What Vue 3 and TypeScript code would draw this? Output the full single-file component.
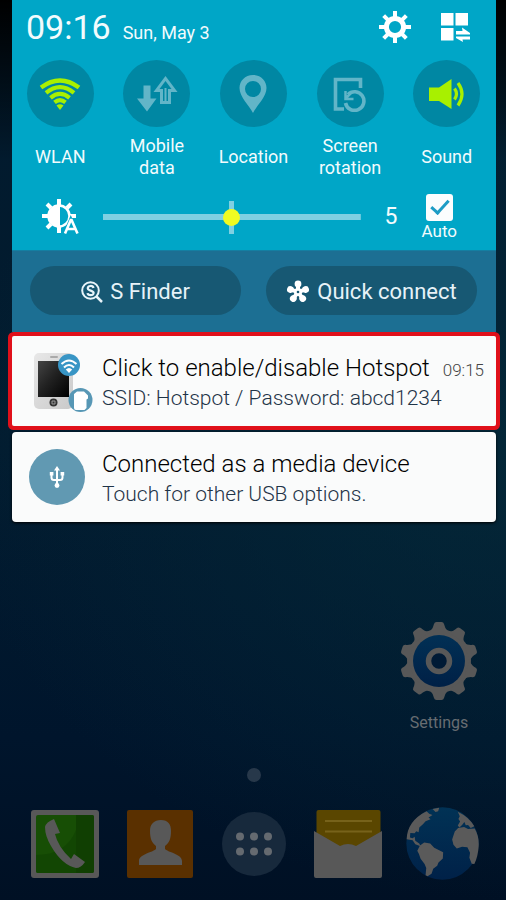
<script setup lang="ts">
import { ref } from 'vue'

interface Toggle {
  id: string
  label: string
  on: boolean
}

const toggles = ref<Toggle[]>([
  { id: 'wlan', label: 'WLAN', on: true },
  { id: 'data', label: 'Mobile data', on: false },
  { id: 'location', label: 'Location', on: false },
  { id: 'rotation', label: 'Screen rotation', on: false },
  { id: 'sound', label: 'Sound', on: true },
])

const brightness = ref<number>(5)
const autoBrightness = ref<boolean>(true)

const eightTeeth: number[] = Array.from({ length: 8 }, (_, i) => i * 45)
const tenTeeth: number[] = Array.from({ length: 10 }, (_, i) => i * 36)
const petals: number[] = Array.from({ length: 5 }, (_, i) => i * 72)
</script>

<template>
  <div class="phone">
    <section class="shade">
      <div class="quick">
        <header class="status">
          <time class="clock">09:16</time>
          <span class="date">Sun, May 3</span>
          <button class="icon-button" type="button" aria-label="Settings">
            <svg width="32" height="32" viewBox="-16 -16 32 32" aria-hidden="true">
              <circle r="8.6" fill="none" stroke="#fff" stroke-width="5" />
              <rect v-for="a in eightTeeth" :key="a" x="-2" y="-16" width="4" height="7" fill="#fff" :transform="`rotate(${a})`" />
            </svg>
          </button>
          <button class="icon-button" type="button" aria-label="Edit quick panel">
            <svg width="30" height="30" viewBox="0 0 30 30" fill="#fff" aria-hidden="true">
              <path d="M0 1h12.500v12.500H0zM14.500 1H27v12.500H14.500zM0 16h12.500v12.500H0z" />
              <path d="M15 19h6.500l-.5-3.500 8 5.500v1.500H15zM29 24.500H15V26l7 4-.5-2.500H29z" />
            </svg>
          </button>
        </header>

        <div class="toggles">
          <button v-for="t in toggles" :key="t.id" class="toggle" :class="{ on: t.on }" type="button" :aria-pressed="t.on" @click="t.on = !t.on">
            <span class="disc">
              <svg v-if="t.id === 'wlan'" width="42" height="32" viewBox="0 0 42 32" aria-hidden="true">
                <g fill="none" stroke="currentColor" stroke-width="4.200">
                  <path d="M2 9.500Q21-4.500 40 9.500" />
                  <path d="M7 14.800Q21 3.500 35 14.800" />
                  <path d="M11.500 19.800Q21 12 30.500 19.800" />
                  <path d="M15.500 24.400Q21 20 26.500 24.400" />
                </g>
                <path d="M17.500 27.500Q21 25 24.500 27.500L21 32z" fill="currentColor" />
              </svg>
              <svg v-else-if="t.id === 'data'" width="42" height="36" viewBox="0 0 42 36" aria-hidden="true">
                <path d="M7.500 9.500h7v13h6L11 35.500 1 22.500h6.500z" fill="currentColor" />
                <path fill-rule="evenodd" d="M29.500 0L41.500 16H35v12H24V16h-6.500zM29.500 5l-6 8H27v12h1.500V12h2v13H32V13h3.500z" fill="currentColor" />
              </svg>
              <svg v-else-if="t.id === 'location'" width="30" height="38" viewBox="0 0 30 38" aria-hidden="true">
                <path fill-rule="evenodd" fill="currentColor" d="M15 0C7 0 1.500 6 1.500 13c0 9 9.500 17 13.500 25 4-8 13.500-16 13.500-25C28.500 6 23 0 15 0zm0 6a8 8 0 1 1 0 16 8 8 0 0 1 0-16z" />
              </svg>
              <svg v-else-if="t.id === 'rotation'" width="34" height="36" viewBox="0 0 34 36" fill="none" stroke="currentColor" stroke-width="3.600" aria-hidden="true">
                <path d="M11 33H2.500V3.500h25V12" />
                <path d="M15 18.500A9.300 9.300 0 1 1 12.500 27" />
                <path d="M12.500 15v8h8M13 22l6-6" stroke-width="2.500" />
              </svg>
              <svg v-else width="38" height="32" viewBox="0 0 38 32" aria-hidden="true">
                <path d="M1 9.500h10L23.500 1v30L11 23H1z" fill="currentColor" />
                <path d="M26.500 10.500Q30.500 16 26.500 21.500M30 5Q38 16 30 27.500" fill="none" stroke="currentColor" stroke-width="3.200" />
              </svg>
            </span>
            <span class="toggle-label"><span>{{ t.label }}</span></span>
          </button>
        </div>

        <div class="brightness">
          <svg class="sun" width="38" height="38" viewBox="-18 -18 38 38" aria-hidden="true">
            <g stroke="#fff" stroke-width="4">
              <path d="M0-17v6M0 11v6M-17 0h6M11 0h6M-12-12l4 4M12-12l-4 4M-12 12l4-4" />
            </g>
            <circle r="10.500" fill="none" stroke="#fff" stroke-width="2.500" />
            <path d="M1-11.500A11.500 11.500 0 0 0 1 11.500z" fill="#fff" />
            <path d="M6 18L11.800 4 18 18z" fill="#00a6c7" stroke="#00a6c7" stroke-width="4" />
            <path d="M6 17.500L11.800 4h.8L18.500 17.500M8.500 13h7.500" fill="none" stroke="#fff" stroke-width="2.600" />
          </svg>
          <div class="slider">
            <input v-model.number="brightness" type="range" min="0" max="10" aria-label="Brightness" />
          </div>
          <output class="level">{{ brightness }}</output>
          <label class="auto">
            <input v-model="autoBrightness" type="checkbox" />
            <span>Auto</span>
          </label>
        </div>
      </div>

      <div class="shortcuts">
        <button class="pill" type="button">
          <svg width="22" height="22" viewBox="0 0 22 22" fill="none" stroke="#e8f4fa" aria-hidden="true">
            <circle cx="9.500" cy="9.500" r="8.300" stroke-width="2" />
            <path d="M15.500 15.500l5.500 5.500" stroke-width="2.500" />
            <path d="M12.500 7C12 4.200 6.500 4.300 6.800 7.300c.2 2.700 5.700 1.900 5.800 4.600.1 2.900-5.600 3-6.100.2" stroke-width="2.200" />
          </svg>
          <span>S Finder</span>
        </button>
        <button class="pill" type="button">
          <svg width="24" height="24" viewBox="-12 -12 24 24" aria-hidden="true">
            <g v-for="a in petals" :key="a" :transform="`rotate(${a})`" fill="#fff">
              <circle cy="-8" r="3.400" />
              <rect x="-2" y="-7" width="4" height="6" />
            </g>
            <circle r="4" fill="#fff" />
            <circle r="1.300" fill="#175873" />
          </svg>
          <span>Quick connect</span>
        </button>
      </div>

      <div class="notifications">
        <article class="card highlighted">
          <svg class="card-icon" width="66" height="62" viewBox="0 0 66 62" aria-hidden="true">
            <defs>
              <linearGradient id="body" x2="1" y2="1"><stop stop-color="#e8e8e8" /><stop offset="1" stop-color="#c9c9c9" /></linearGradient>
              <linearGradient id="glass" x2="1" y2="1"><stop stop-color="#444" /><stop offset=".45" stop-color="#222" /><stop offset="1" stop-color="#000" /></linearGradient>
            </defs>
            <rect x="6" y="2" width="39" height="56" rx="5" fill="url(#body)" />
            <rect x="22" y="5" width="8" height="2" rx="1" fill="#aaa" />
            <rect x="10" y="10" width="31" height="36" fill="url(#glass)" />
            <circle cx="25.500" cy="51.500" r="4" fill="#333" />
            <path d="M24 50h3v3h-3z" fill="none" stroke="#999" />
            <circle cx="41" cy="14" r="11" fill="#3895c5" />
            <g fill="none" stroke="#fff" stroke-width="2">
              <path d="M33.500 13Q41 6 48.500 13M36 16.500Q41 11.500 46 16.500" />
            </g>
            <path d="M37.800 18.500Q41 15.500 44.200 18.500L41 22z" fill="#fff" />
            <circle cx="52.500" cy="49" r="12" fill="#5797b5" />
            <path d="M46 43l3-2.500h7l4 4v3l-1.500 1V57l-2 2H48q-2 0-2-2z" fill="#fff" />
          </svg>
          <div class="card-text">
            <div class="card-head">
              <h2>Click to enable/disable Hotspot</h2>
              <time>09:15</time>
            </div>
            <p>SSID: Hotspot / Password: abcd1234</p>
          </div>
        </article>
        <article class="card">
          <svg class="card-icon" width="66" height="62" viewBox="0 0 66 62" aria-hidden="true">
            <circle cx="29" cy="30" r="28" fill="#6199b2" />
            <g fill="none" stroke="#fff" stroke-width="2">
              <path d="M29 22v17M23.500 27v3.500q0 2.500 2.500 2.500h6q2.500 0 2.500-2.500V27" />
            </g>
            <path d="M29 19l3 4.500h-6zM21.800 25h3.600v3.600h-3.600zM32.600 25h3.600v3.600h-3.600z" fill="#fff" />
            <circle cx="29" cy="38.500" r="2.400" fill="#fff" />
          </svg>
          <div class="card-text">
            <div class="card-head"><h2>Connected as a media device</h2></div>
            <p>Touch for other USB options.</p>
          </div>
        </article>
      </div>
    </section>

    <main class="home">
      <div class="apps">
        <a class="app" href="#settings">
          <svg width="78" height="78" viewBox="-39 -39 78 78" aria-hidden="true">
            <defs>
              <linearGradient id="gearBlue" x2="0" y2="1"><stop stop-color="#013055" /><stop offset="1" stop-color="#002046" /></linearGradient>
            </defs>
            <g fill="#585858">
              <circle r="32" />
              <path v-for="a in tenTeeth" :key="a" d="M-9.500-29Q-5.500-33-5-37Q-4.500-39-2.500-39H2.500Q4.500-39 5-37Q5.500-33 9.500-29z" :transform="`rotate(${a})`" />
            </g>
            <circle r="26" fill="url(#gearBlue)" />
            <circle r="10.500" fill="#001a35" stroke="#585858" stroke-width="5.500" />
          </svg>
          <span>Settings</span>
        </a>
      </div>
      <span class="page-dot"></span>
      <nav class="dock">
        <a href="#phone" aria-label="Phone">
          <svg width="68" height="68" viewBox="0 0 68 68" aria-hidden="true">
            <rect width="68" height="68" rx="3" fill="#585858" />
            <rect x="5" y="5" width="58" height="58" rx="2" fill="#174e05" />
            <path d="M45 5h16q2 0 2 2v54q0 2-2 2H45z" fill="#103f02" />
            <path d="M5 45q30 0 40-25v43H7q-2 0-2-2z" fill="#124603" />
            <path d="M23 9l6 14-5 1q3 13 16 25l3-5 11 8q-4 6-9 6Q31 55 20 36 14 26 14 17q1-5 9-8z" fill="#585858" />
          </svg>
        </a>
        <a href="#contacts" aria-label="Contacts">
          <svg width="66" height="68" viewBox="0 0 66 68" aria-hidden="true">
            <rect width="66" height="68" rx="2" fill="#5a3000" />
            <path d="M34 10c7 0 10 4 10 11 0 8-2 12-6 15v3c2 3 17 5 17 12v4H12v-4c0-7 15-9 17-12v-3c-4-3-6-7-6-15 0-7 4-11 11-11z" fill="#585858" />
          </svg>
        </a>
        <a href="#apps" aria-label="All apps">
          <svg width="64" height="64" viewBox="0 0 64 64" aria-hidden="true">
            <circle cx="32" cy="32" r="32" fill="#17293c" />
            <g fill="#656a70">
              <circle cx="18" cy="24.500" r="4" /><circle cx="32" cy="24.500" r="4" /><circle cx="46" cy="24.500" r="4" />
              <circle cx="18" cy="39.500" r="4" /><circle cx="32" cy="39.500" r="4" /><circle cx="46" cy="39.500" r="4" />
            </g>
          </svg>
        </a>
        <a href="#messages" aria-label="Messages">
          <svg width="68" height="68" viewBox="0 0 68 68" aria-hidden="true">
            <rect x="2.500" width="64" height="45" rx="2" fill="#5a4600" />
            <path d="M11 11h47M11 21.500h47" stroke="#77621a" stroke-width="2" />
            <path d="M0 21l26 15q8-4 16 0l26-15v45q0 2-2 2H2q-2 0-2-2z" fill="#585858" />
          </svg>
        </a>
        <a href="#internet" aria-label="Internet">
          <svg width="73" height="73" viewBox="0 0 220 220" aria-hidden="true">
            <defs><linearGradient id="sea" x2="0" y2="1"><stop stop-color="#013255" /><stop offset="1" stop-color="#002148" /></linearGradient></defs>
            <circle cx="110" cy="110" r="109" fill="url(#sea)" />
            <g fill="#5a5a5a">
              <path d="M62 13l8 7 10 4-12 8 6 5-15 6-8 9-11 10-2 14-7-3-5 6-13-1-1 14 8 2 6-4 2 12 12 8 4 8-16-6-8-12-18-3Q4 42 62 13zM80 6l20-4-3 11-8 2z" />
              <path d="M42 116l13-9 18 3 12 13 27 13-1 19-13 12-4 10-12 9-5 15-12 8-6-3 2-22-5-12-12-16-5-14-5-10z" />
              <path d="M156 14q34 16 50 44l-11 5-8-9-7 1-4-10-7 9-8 8-5-6 7-12-5-8 4-8z" />
              <path d="M147 74l10-11 18-3 12 6 20-1q14 24 12 54-2 30-13 53l-8-1-7-18 2-15-8-17-16-1-16 5-10-11-4-16z" />
            </g>
          </svg>
        </a>
      </nav>
    </main>
  </div>
</template>

<style>
body {
  margin: 0;
  background: #00101f;
}
</style>

<style scoped>
.phone {
  display: flex;
  flex-direction: column;
  min-height: 100vh;
  box-sizing: border-box;
  font-family: Roboto, "Liberation Sans", sans-serif;
  background:
    linear-gradient(to bottom, #000 0, rgba(0, 0, 0, 0) 160px),
    radial-gradient(ellipse 110% 50% at 100% 50%, rgba(4, 42, 58, 0.8), rgba(4, 42, 58, 0)),
    linear-gradient(to bottom, #021a2d 0, #021c30 50%, #00152c 82%, #001024 100%);
}
button {
  border: 0;
  padding: 0;
  background: none;
  color: inherit;
  font: inherit;
  cursor: pointer;
}
svg {
  display: block;
  flex: none;
}
.shade {
  margin: 0 10px 0 12px;
}
.quick {
  background: #00a6c7;
  color: #f2fbfd;
}
.status {
  display: flex;
  align-items: center;
  height: 54px;
  padding: 0 25px 0 14px;
}
.clock {
  font-size: 34px;
  line-height: 54px;
}
.date {
  flex: 1;
  font-size: 18px;
  line-height: 24px;
  padding: 12px 0 0 12px;
}
.icon-button + .icon-button {
  margin-left: 30px;
}
.toggles {
  display: grid;
  grid-template-columns: repeat(5, 1fr);
  padding: 6px 1px 0 0;
}
.toggle {
  display: flex;
  flex-direction: column;
  align-items: center;
}
.disc {
  display: flex;
  align-items: center;
  justify-content: center;
  width: 67px;
  height: 67px;
  border-radius: 50%;
  background: #0087a3;
  color: #62b5c8;
}
.on .disc {
  color: #a8f000;
}
.toggle-label {
  display: flex;
  align-items: center;
  justify-content: center;
  height: 44px;
  width: 76px;
  margin-top: 8px;
  font-size: 18px;
  line-height: 22px;
  text-align: center;
}
.brightness {
  display: flex;
  align-items: center;
  height: 66px;
  padding: 5px 39px 0 29px;
}
.slider {
  flex: 1;
  display: flex;
  margin: 0 24px;
  background: linear-gradient(#7fd0e2, #7fd0e2) center / 5px 33px no-repeat;
}
.slider input {
  appearance: none;
  width: 100%;
  height: 34px;
  margin: 0;
  background: linear-gradient(#7fd0e2, #7fd0e2) center / 100% 6px no-repeat;
}
.slider input::-webkit-slider-thumb {
  appearance: none;
  width: 17px;
  height: 17px;
  border-radius: 50%;
  background: #f0fb22;
}
.level {
  font-size: 23px;
  line-height: 28px;
}
.auto {
  display: flex;
  flex-direction: column;
  align-items: center;
  margin-left: 24px;
  font-size: 17px;
  line-height: 20px;
}
.auto input {
  appearance: none;
  position: relative;
  width: 27px;
  height: 27px;
  margin: 0;
  border-radius: 3px;
  background: #fbfdfe;
}
.auto input:checked::after {
  content: "";
  position: absolute;
  left: 9px;
  top: 2px;
  width: 7px;
  height: 15px;
  border: solid #1d9cc6;
  border-width: 0 3px 3px 0;
  transform: rotate(42deg);
}
.shortcuts {
  display: grid;
  grid-template-columns: 1fr 1fr;
  gap: 25px;
  padding: 15px 19px 17px 18px;
  background: #1c6f93;
  border-top: 1px solid #147fa2;
}
.pill {
  display: flex;
  align-items: center;
  justify-content: center;
  gap: 7px;
  height: 49px;
  border-radius: 25px;
  background: #175873;
  color: #e6f2f8;
  font-size: 22px;
  line-height: 28px;
  padding-top: 2px;
}
.notifications {
  display: flex;
  flex-direction: column;
  gap: 6px;
  padding-top: 4px;
}
.card {
  display: flex;
  align-items: center;
  gap: 8px;
  height: 90px;
  box-sizing: border-box;
  padding: 2px 12px 0 16px;
  border-radius: 4px;
  background: #fafbfb;
  box-shadow: 0 1px 3px #000;
}
.highlighted {
  border-radius: 2px;
  box-shadow: 0 0 0 4px #e0101a;
}
.card-text {
  flex: 1;
  min-width: 0;
}
.card-head {
  display: flex;
  align-items: baseline;
  justify-content: space-between;
}
h2 {
  margin: 0;
  font-size: 24px;
  font-weight: 300;
  line-height: 32px;
  color: #000;
}
.card-head time {
  font-size: 17px;
  font-weight: 300;
  color: #444;
}
.card p {
  margin: 0;
  font-size: 21px;
  font-weight: 300;
  line-height: 28px;
  color: #1f3448;
}
.home {
  flex: 1;
  display: flex;
  flex-direction: column;
  justify-content: flex-end;
  padding: 20px 16px 20px 18px;
}
.home a {
  text-decoration: none;
}
.apps {
  display: flex;
  justify-content: flex-end;
  padding-right: 12px;
}
.app {
  display: flex;
  flex-direction: column;
  align-items: center;
  gap: 12px;
  font-size: 16px;
  line-height: 22px;
  color: #686d72;
}
.page-dot {
  align-self: center;
  width: 14px;
  height: 14px;
  margin: 34px 0 25px;
  border-radius: 50%;
  background: #27384a;
}
.dock {
  display: grid;
  grid-template-columns: repeat(5, 1fr);
  align-items: center;
  justify-items: center;
}
</style>
